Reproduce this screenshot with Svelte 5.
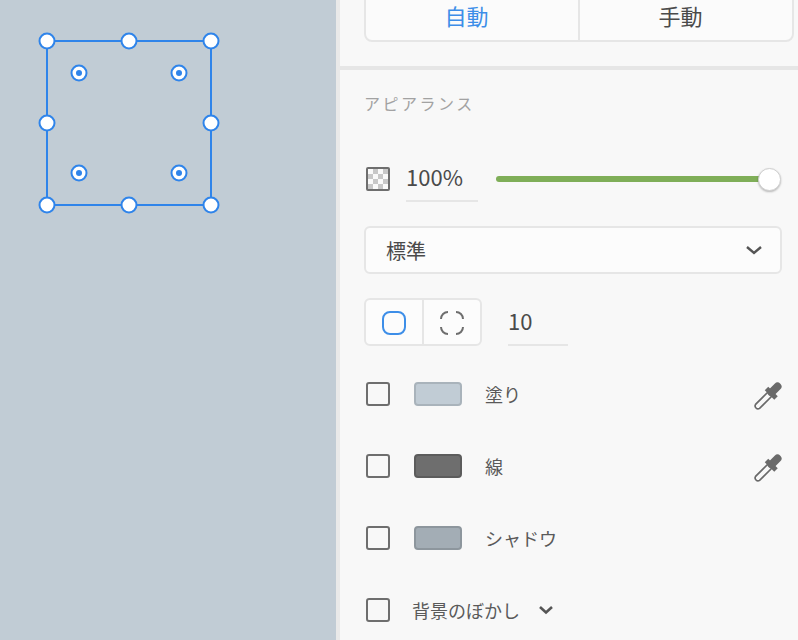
<script lang="ts">
// Selection handles on the canvas, in svg coordinates
const handles = [
  [47, 41], [129, 41], [211, 41],
  [47, 123], [211, 123],
  [47, 205], [129, 205], [211, 205],
];
const radiusHandles = [
  [79, 73], [179, 73],
  [79, 173], [179, 173],
];
const colorRows = [
  { label: "塗り", color: "#c1ccd5", edge: "#a9b3bb", picker: true },
  { label: "線", color: "#6e6e6e", edge: "#5c5c5c", picker: true },
  { label: "シャドウ", color: "#a3adb5", edge: "#8d969d", picker: false },
];
</script>

{#snippet dropper()}
  <svg class="dropper" width="28" height="28" viewBox="0 0 28 28">
    <path d="M14 10 1.6 22.4a2.9 2.9 0 0 0 4 4L18 14" fill="none" stroke="#6a6a6a" stroke-width="1.7" />
    <path d="M12.5 6.5 22 16" fill="none" stroke="#6a6a6a" stroke-width="5" />
    <path d="M17.5 10.5 23.5 4.5" fill="none" stroke="#6a6a6a" stroke-width="8" stroke-linecap="round" />
  </svg>
{/snippet}

<div class="screen">
  <div class="canvas">
    <svg width="336" height="640" viewBox="0 0 336 640">
      <rect x="47" y="41" width="164" height="164" fill="none" stroke="#2f84ea" stroke-width="2" />
      {#each handles as [cx, cy]}
        <circle {cx} {cy} r="7.5" fill="#fff" stroke="#2f84ea" stroke-width="2" />
      {/each}
      {#each radiusHandles as [cx, cy]}
        <circle {cx} {cy} r="7.5" fill="#fff" stroke="#2f84ea" stroke-width="2" />
        <circle {cx} {cy} r="3" fill="#2f84ea" />
      {/each}
    </svg>
  </div>

  <aside class="panel">
    <div class="top">
      <div class="tabs">
        <button class="tab active">自動</button>
        <button class="tab">手動</button>
      </div>
    </div>

    <section class="appearance">
      <h2>アピアランス</h2>

      <div class="opacity">
        <span class="checker"></span>
        <span class="field percent">100%</span>
        <div class="slider"><span class="thumb"></span></div>
      </div>

      <div class="select">
        <span>標準</span>
        <svg width="18" height="10" viewBox="0 0 18 10">
          <path d="M2 2l7 6 7-6" fill="none" stroke="#555" stroke-width="2.4" />
        </svg>
      </div>

      <div class="corners">
        <div class="segments">
          <button class="segment" aria-label="全ての角">
            <svg width="24" height="24" viewBox="0 0 24 24">
              <rect x="1" y="1" width="22" height="22" rx="7" fill="none" stroke="#3d8ee8" stroke-width="2" />
            </svg>
          </button>
          <button class="segment" aria-label="個別の角">
            <svg width="24" height="24" viewBox="0 0 24 24">
              <path d="M1 8a7 7 0 0 1 7-7M16 1a7 7 0 0 1 7 7M23 16a7 7 0 0 1-7 7M8 23a7 7 0 0 1-7-7" fill="none" stroke="#6e6e6e" stroke-width="2" />
            </svg>
          </button>
        </div>
        <span class="field radius">10</span>
      </div>

      {#each colorRows as row}
        <div class="row">
          <span class="check"></span>
          <span class="swatch" style="background: {row.color}; border-color: {row.edge}"></span>
          <span class="label">{row.label}</span>
          {#if row.picker}
            {@render dropper()}
          {/if}
        </div>
      {/each}

      <div class="row blur">
        <span class="check"></span>
        <span class="label">背景のぼかし</span>
        <svg width="16" height="10" viewBox="0 0 16 10">
          <path d="M2 2l6 5.5L14 2" fill="none" stroke="#555" stroke-width="2.6" />
        </svg>
      </div>
    </section>
  </aside>
</div>

<style>
:global(body) {
  margin: 0;
  font-family: "Noto Sans CJK JP", "Liberation Sans", sans-serif;
}
.screen {
  display: flex;
  width: 798px;
  height: 640px;
  overflow: hidden;
  background: #f8f8f8;
}
.canvas {
  width: 336px;
  flex: none;
  background: #c1ccd5;
}
.canvas svg {
  display: block;
}
.panel {
  flex: 1;
  min-width: 0;
  border-left: 4px solid #e9e9e9;
  color: #4a4a4a;
}
/* the tab bar is scrolled partly out of view */
.top {
  height: 74px;
  margin-top: -8px;
  padding: 0 4px 0 24px;
  border-bottom: 4px solid #e6e6e6;
}
.tabs {
  display: flex;
  height: 50px;
  box-sizing: border-box;
  border: 2px solid #e6e6e6;
  border-radius: 8px;
  background: #fbfbfb;
}
.tab {
  flex: 1;
  padding: 0 11px 4px 0;
  border: 0;
  background: none;
  font: inherit;
  font-size: 22px;
  line-height: 42px;
  color: #4a4a4a;
}
.tab + .tab {
  border-left: 2px solid #e6e6e6;
}
.tab.active {
  color: #3d8ee8;
}
.appearance {
  padding: 0 16px 0 24px;
}
h2 {
  margin: 0;
  padding-top: 23px;
  font-size: 16px;
  line-height: 20px;
  font-weight: 400;
  letter-spacing: 2.5px;
  color: #a2a2a2;
}
.opacity {
  display: flex;
  align-items: center;
  margin-top: 42px;
  height: 48px;
}
.checker {
  flex: none;
  width: 20px;
  height: 20px;
  margin-left: 2px;
  border: 2px solid #6e6e6e;
  border-radius: 2px;
  background: repeating-conic-gradient(#c8c8c8 0 25%, #fafafa 0 50%) 0 0 / 10px 10px;
}
.field {
  display: block;
  box-sizing: border-box;
  border-bottom: 2px solid #e6e6e6;
  font-size: 22px;
  line-height: 32px;
  color: #4a4a4a;
}
.percent {
  width: 72px;
  height: 46px;
  margin: 0 18px 0 16px;
  padding-top: 4px;
}
.slider {
  position: relative;
  flex: 1;
  height: 6px;
  margin-right: 2px;
  border-radius: 3px;
  background: #7fae58;
}
.thumb {
  position: absolute;
  right: -1px;
  top: -8px;
  box-sizing: border-box;
  width: 23px;
  height: 23px;
  border-radius: 50%;
  background: #fff;
  border: 1px solid #d0d0d0;
  box-shadow: 0 1px 2px rgba(0, 0, 0, 0.25);
}
.select {
  display: flex;
  align-items: center;
  justify-content: space-between;
  box-sizing: border-box;
  height: 48px;
  margin-top: 23px;
  padding: 0 17px 0 20px;
  border: 2px solid #e6e6e6;
  border-radius: 6px;
  background: #fcfcfc;
  font-size: 20px;
}
.corners {
  display: flex;
  margin-top: 24px;
}
.segments {
  display: flex;
  box-sizing: border-box;
  width: 118px;
  height: 48px;
  border: 2px solid #e6e6e6;
  border-radius: 6px;
  background: #fcfcfc;
}
.segment {
  flex: 1;
  display: flex;
  align-items: center;
  justify-content: center;
  padding: 2px 0 0;
  border: 0;
  background: none;
}
.segment + .segment {
  border-left: 2px solid #e6e6e6;
}
.radius {
  width: 60px;
  height: 48px;
  margin-left: 26px;
  padding-top: 6px;
}
.row {
  display: flex;
  align-items: center;
  height: 28px;
  margin-top: 44px;
  font-size: 18px;
}
.corners + .row {
  margin-top: 34px;
}
.check {
  flex: none;
  box-sizing: border-box;
  width: 24px;
  height: 24px;
  margin-left: 2px;
  border: 2px solid #6e6e6e;
  border-radius: 3px;
}
.swatch {
  flex: none;
  box-sizing: border-box;
  width: 48px;
  height: 24px;
  margin-left: 24px;
  border: 2px solid;
  border-radius: 4px;
}
.label {
  margin-left: 23px;
  color: #5a5a5a;
}
.dropper {
  margin-left: auto;
  margin-top: 4px;
}
.blur .label {
  margin: 0 18px 0 22px;
}
</style>
